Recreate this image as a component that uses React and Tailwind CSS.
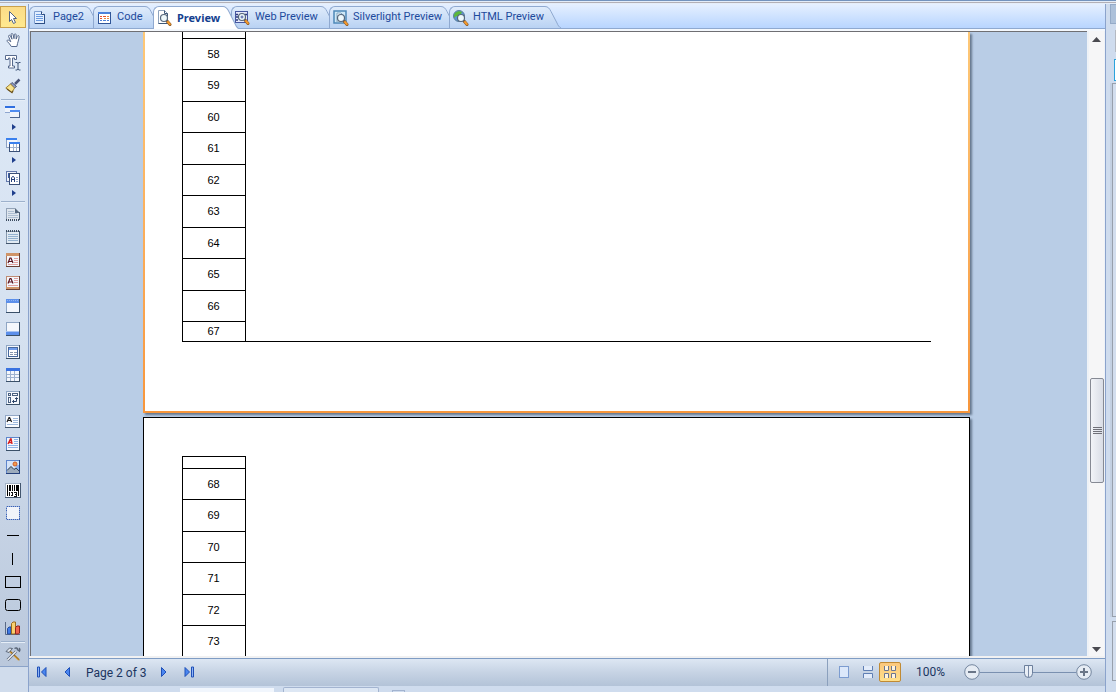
import React from 'react';
import clsx from 'clsx';

const Icon = ({ size = 16, className, children }) => (
  <svg width={size} height={size} viewBox={`0 0 ${size} ${size}`} className={clsx('shrink-0', className)} fill="none" aria-hidden="true">
    {children}
  </svg>
);

/* ---------- shared bits of the icons ---------- */

const Lens = ({ x = 6, y = 6 }) => (
  <g>
    <path d={`M${x + 3} ${y + 3} l3 3.500`} stroke="#8a5a2a" strokeWidth="3" strokeLinecap="round" />
    <path d={`M${x + 4} ${y + 4} l1.800 2.200`} stroke="#f59a2c" strokeWidth="2" strokeLinecap="round" />
    <circle cx={x} cy={y} r="3.500" fill="#eef8fb" stroke="#56677c" strokeWidth="1.200" />
  </g>
);

const Sheet = ({ children, border = '#3a5068', light = '#8fa6c4' }) => (
  <g shapeRendering="crispEdges">
    <rect x="1" y="1" width="14" height="14" fill={border} />
    <rect x="1" y="1" width="13" height="13" fill={light} />
    <rect x="2" y="2" width="12" height="12" fill="#f4f7fc" />
    {children}
  </g>
);

/* ---------- tab icons ---------- */

const PageIcon = () => (
  <Icon>
    <path d="M1.500 1.500h7l3 3v9h-10z" fill="#e3efff" stroke="#7f9fd0" />
    <path d="M11.500 4v10M2 13.500h10" stroke="#2d4f86" />
    <path d="M8.500 1.500v3h3" fill="#fff" stroke="#2d4f86" />
    <path d="M3 4.500h5M3 6.500h7M3 8.500h7M3 10.500h7" stroke="#6b9be0" />
  </Icon>
);

const CodeIcon = () => (
  <Icon>
    <g shapeRendering="crispEdges">
      <rect x="1" y="2" width="13" height="12" fill="#2f5597" />
      <rect x="1" y="2" width="12" height="2" fill="#4d82da" />
      <rect x="2" y="4" width="11" height="9" fill="#fff" />
      <path d="M3 6.500h2M6 6.500h3M3 8.500h2" stroke="#e8502e" />
      <path d="M10 6.500h2M7 8.500h2M10 8.500h2" stroke="#f08a3c" />
      <path d="M3 10.500h2M6 10.500h3M10 10.500h2" stroke="#4d82da" />
    </g>
  </Icon>
);

const PreviewIcon = () => (
  <Icon>
    <path d="M1.500 .5h6l3 3v10h-9z" fill="#fff" stroke="#8fa3bd" />
    <path d="M7.500 .5v3h3v10h-9" stroke="#3e5878" />
    <Lens x={7} y={8} />
  </Icon>
);

const WebIcon = () => (
  <Icon>
    <rect x="0.500" y="1.500" width="12" height="11" fill="#e6e9fa" stroke="#4656a0" />
    <path d="M1 4.500h2M1 7h2M1 10h2M10 4.500h2" stroke="#2d3b7c" strokeWidth="1.500" />
    <Lens x={7} y={7} />
    <path d="M5.500 7h3M7 5.500v3" stroke="#4656a0" />
  </Icon>
);

const SilverlightIcon = () => (
  <Icon>
    <rect x="1" y="1" width="12" height="12" fill="#cfe8f6" stroke="#4d88b8" strokeWidth="1.500" />
    <path d="M4 3h4l3 3v6H4z" fill="#fff" stroke="#7fa6c4" />
    <Lens x={8} y={8} />
  </Icon>
);

const HtmlIcon = () => (
  <Icon>
    <circle cx="6" cy="6" r="5.500" fill="#5c94d8" stroke="#5a7f9c" />
    <path d="M2 3c2-2 5-2.500 7-1l-1 2-2 .5L5 7 3 6 1.500 8C.5 6 1 4 2 3z" fill="#5cb83a" />
    <Lens x={8} y={8} />
  </Icon>
);

/* ---------- toolbox icons ---------- */

const ArrowTool = () => (
  <Icon>
    <path d="M4.500 2.500v10l2-2 2 4 2-1-2-4h3z" fill="#fff" stroke="#4f6285" />
  </Icon>
);

const HandTool = () => (
  <Icon>
    <path d="M5.500 14.500c-1-2-2.500-3.500-4-5-.8-1.200.5-2 1.500-1.200L5 9.800 2.800 4.500c-.4-1.400 1.200-1.800 1.800-.6l1.600 3.300-.9-4.600c-.1-1.400 1.500-1.500 1.900-.2l1 4.300.3-4c.2-1.300 1.700-1.100 1.800.1l.1 4.300 1.100-2.900c.6-1.100 1.900-.7 1.800.5-.1 3-1.500 5.500-2.200 9.800z" transform="translate(.8 0)" fill="#fff" stroke="#56698c" strokeLinejoin="round" />
  </Icon>
);

const TextTool = () => (
  <Icon>
    <path d="M.5 .5h11v4h-2v-1.500h-2v8h2v2h-6v-2h1.500v-8h-1.500v1.500h-3z" fill="#fff" stroke="#56698c" />
    <path d="M10.500 7.500h1.500l1 .8 1-.8h1.500M13 8v6M10.500 15h1.500l1-.8 1 .8h1.500" stroke="#3f5479" />
  </Icon>
);

const BrushTool = () => (
  <Icon>
    <path d="M14.500 1.500 10 6" stroke="#4a5578" strokeWidth="2.500" />
    <path d="M7 4.500l4.500 4L9.500 10 5.500 6z" fill="#8f9cc4" stroke="#4a5578" />
    <path d="M5.500 6 9.500 10 7 14.500C5 13 2.500 11.500.8 10z" fill="#f8e38c" stroke="#a08338" strokeLinejoin="round" />
    <path d="M2 11l5 3.700 1-2" stroke="#6b5220" strokeWidth="1.200" />
  </Icon>
);

const BandsTool = () => (
  <Icon>
    <g shapeRendering="crispEdges">
      <rect x="0" y="2" width="10" height="6" fill="#eef3fb" />
      <path d="M0 8.500h5" stroke="#8fa6cf" />
      <rect x="0" y="2" width="10" height="2" fill="#2f6fe0" />
      <rect x="5" y="6" width="10" height="7" fill="#eef3fb" />
      <path d="M14.500 6v8M5 13.500h10" stroke="#4a6490" />
      <rect x="5" y="6" width="10" height="2" fill="#4f8cf0" />
    </g>
  </Icon>
);

const CrossBandsTool = () => (
  <Icon>
    <g shapeRendering="crispEdges">
      <rect x="1" y="1" width="11" height="9" fill="#f3f6fc" />
      <path d="M1.500 1v9H4" stroke="#8aa0c4" />
      <rect x="1" y="1" width="11" height="2" fill="#3a80ee" />
      <rect x="4" y="5" width="11" height="10" fill="#fff" />
      <path d="M4.500 5v10M4 14.500h11M14.500 5v10" stroke="#3a5078" />
      <rect x="4" y="5" width="11" height="2" fill="#3a80ee" />
      <path d="M8.500 7v7M11.500 7v7M5 10.500h9" stroke="#a0b2cf" />
    </g>
  </Icon>
);

const ComponentsTool = () => (
  <Icon>
    <g shapeRendering="crispEdges">
      <rect x="1.500" y="1.500" width="10" height="10" fill="#eef2fa" stroke="#6379ac" />
      <path d="M3.500 3v5M3 3.500h2" stroke="#3c5ea6" />
      <rect x="4.500" y="3.500" width="10" height="11" fill="#fff" stroke="#3a5078" />
    </g>
    <path d="M6.500 12V8L7.500 6.500h1L9.500 8v4M6.500 9.500H9.500" stroke="#24407c" />
    <path d="M11 7.500h2M11 9.500h2M11 11.500h2" stroke="#8aa0c4" />
  </Icon>
);

const ReportTitle = () => (
  <Icon>
    <g shapeRendering="crispEdges">
      <path d="M1 2h9l5 5v7H1z" fill="#dfe6ee" />
      <path d="M1.500 2v12M1 2.500h9" stroke="#93a3b8" />
      <path d="M3 5.500h6M3 7.500h9M3 9.500h10M3 11.500h10" stroke="#aebfd2" />
      <path d="M14.500 6v8" stroke="#4b5d73" />
      <path d="M1 14h14" stroke="#3c4c60" strokeDasharray="1 1" strokeWidth="2" />
    </g>
    <path d="M10 2v5h5z" fill="#56687e" />
  </Icon>
);

const ReportSummary = () => (
  <Icon>
    <g shapeRendering="crispEdges">
      <rect x="1" y="2" width="14" height="13" fill="#43566e" />
      <rect x="1" y="2" width="13" height="12" fill="#8496ac" />
      <rect x="2" y="3" width="12" height="11" fill="#e1eaf3" />
      <path d="M3 5.500h10M3 7.500h10M3 9.500h10M3 11.500h10" stroke="#93b1cf" />
      <path d="M1 2h14" stroke="#3c4c60" strokeDasharray="1 1" strokeWidth="2" />
    </g>
  </Icon>
);

const PageHeaderBand = () => (
  <Icon>
    <Sheet border="#6b3f34" light="#b07c66">
      <rect x="1" y="1" width="13" height="3" fill="#cf9468" />
      <path d="M9 6.500h4M9 8.500h4M3 12.500h10M9 10.500h4" stroke="#e0a0a0" />
    </Sheet>
    <path d="M3 11l2-5h1l2 5M4 9.500h3" stroke="#5c1420" strokeWidth="1.200" />
  </Icon>
);

const PageFooterBand = () => (
  <Icon>
    <Sheet border="#6b3f34" light="#c08c74">
      <rect x="1" y="12" width="13" height="2" fill="#cf9468" />
      <path d="M9 3.500h4M9 5.500h4M9 7.500h4M3 10.500h10" stroke="#e0a0a0" />
    </Sheet>
    <path d="M3 8.500l2-5h1l2 5M4 7h3" stroke="#5c1420" strokeWidth="1.200" />
  </Icon>
);

const HeaderBand = () => (
  <Icon>
    <Sheet>
      <rect x="1" y="1" width="13" height="4" fill="#5c8fea" />
      <path d="M2 2.500h11" stroke="#8fb4f4" strokeDasharray="1 1" />
    </Sheet>
  </Icon>
);

const FooterBand = () => (
  <Icon>
    <Sheet>
      <rect x="1" y="11" width="13" height="3" fill="#5c8fea" />
      <path d="M1 10.500h13" stroke="#a9c4f2" />
    </Sheet>
  </Icon>
);

const PanelTool = () => (
  <Icon>
    <Sheet>
      <rect x="3.500" y="3.500" width="9" height="9" fill="#fff" stroke="#47689c" />
      <rect x="4" y="4" width="8" height="2" fill="#6f9cec" />
      <path d="M5 8.500h3M9 8.500h3M5 10.500h3M9 10.500h3" stroke="#8796ac" />
    </Sheet>
  </Icon>
);

const TableTool = () => (
  <Icon>
    <Sheet>
      <rect x="1" y="1" width="14" height="3" fill="#3a72e0" />
      <path d="M2 7.500h12M2 10.500h12M5.500 4v10M9.500 4v10" stroke="#9fb2cf" />
    </Sheet>
  </Icon>
);

const CrossTabTool = () => (
  <Icon>
    <Sheet>
      <path d="M3.500 3.500h2v2h-2zM7.500 3.500h5v2h-5zM3.500 7.500h2v5h-2z" stroke="#4a6080" />
    </Sheet>
    <path d="M7.500 11.500h4V8M9 10l-1.500 1.500L9 13M10 9l1.500-1.500L13 9" stroke="#2c4468" />
  </Icon>
);

const TextComponent = () => (
  <Icon>
    <g shapeRendering="crispEdges">
      <rect x="0" y="2" width="15" height="13" fill="#43566e" />
      <rect x="0" y="2" width="14" height="12" fill="#93a8c6" />
      <rect x="1" y="3" width="13" height="11" fill="#fafcff" />
      <path d="M8 5.500h5M8 7.500h5M8 9.500h5M2 11.500h11" stroke="#9db8dc" />
    </g>
    <path d="M2 9l2-4.500h.6l2 4.500M3 7.500h3" stroke="#222" strokeWidth="1.200" />
  </Icon>
);

const RichTextTool = () => (
  <Icon>
    <Sheet light="#5f86cc">
      <path d="M9 3.500h4M9 5.500h4M9 7.500h4M3 9.500h10M3 11.500h10" stroke="#8fb2e6" />
    </Sheet>
    <path d="M3 8l2.500-5h.6L7 8M4 6.500h3" stroke="#d81e1e" strokeWidth="1.400" />
  </Icon>
);

const ImageTool = () => (
  <Icon>
    <Sheet border="#24407c" light="#5f86cc">
      <rect x="2" y="2" width="12" height="12" fill="#d6e4f8" />
      <rect x="11" y="6" width="3" height="5" fill="#8fb2f0" />
    </Sheet>
    <path d="M2 11l4-4 3 3 2-1.500 3 3V14H2z" fill="#9cabbd" />
    <path d="M2 11.500l4-4 3 3 2-1.500 3 3" stroke="#33475f" />
    <circle cx="10" cy="5" r="2" fill="#f39a4c" stroke="#d05c2a" />
  </Icon>
);

const BarCodeTool = () => (
  <Icon>
    <g shapeRendering="crispEdges">
      <rect x="0" y="1" width="16" height="15" fill="#43566e" />
      <rect x="0" y="1" width="15" height="14" fill="#a3b3c6" />
      <rect x="1" y="2" width="14" height="13" fill="#fff" />
      <path d="M2.500 3v11M13.500 3v11M7.500 3v6M9.500 3v6" stroke="#000" />
      <path d="M5 3v6M12 3v6" stroke="#000" strokeWidth="2" />
      <path d="M4.500 10v4M6 10.500h2M7.500 10v4M6 13.500h2M9 10.500h3M10 12.500h2M9 14.500h3M11.500 10v4" stroke="#111" />
    </g>
  </Icon>
);

const ShapeTool = () => (
  <Icon>
    <rect x="2" y="2" width="12" height="12" fill="#f1f4fa" />
    <rect x="1.500" y="1.500" width="13" height="13" stroke="#3a62b8" strokeDasharray="1 1" shapeRendering="crispEdges" />
    <rect x="1.500" y="1.500" width="13" height="13" stroke="#3a62b8" strokeOpacity="0.300" />
  </Icon>
);

const HLineTool = () => <Icon><path d="M2 7.500h12" stroke="#000" /></Icon>;
const VLineTool = () => <Icon><path d="M7.500 2v12" stroke="#000" /></Icon>;
const RectTool = () => <Icon><rect x="0.500" y="2.500" width="15" height="11" stroke="#000" /></Icon>;
const RoundRectTool = () => <Icon><rect x="0.500" y="2.500" width="15" height="11" rx="2" stroke="#000" /></Icon>;

const ChartTool = () => (
  <Icon>
    <path d="M.5 2v12.500H15" stroke="#5a6a86" />
    <path d="M2.500 8.500 4 7h2v6l-1 1H2.500z" fill="#3f7be8" stroke="#234a9c" />
    <path d="M6.500 3.500 8 2h2.500v11l-1 1h-3z" fill="#f8d070" stroke="#9a6a1c" />
    <path d="M10.500 7.500 12 6h2.500v7l-1 1h-3z" fill="#f0644c" stroke="#8e241c" />
  </Icon>
);

const ToolsTool = () => (
  <Icon>
    <path d="M4 4.500 14 14" stroke="#d8a13c" strokeWidth="2" />
    <path d="M5 5l9.500 9" stroke="#7a5520" strokeWidth="0.800" />
    <path d="M1 5.500 4.500 2l3 .5-3.500 4z" fill="#dfe3ea" stroke="#5a6678" />
    <path d="M2.500 14 11 5.500" stroke="#5a6678" strokeWidth="2.600" />
    <path d="M2.500 14 11 5.500" stroke="#f2f5f8" strokeWidth="1.200" />
    <path d="M9.500 2.500c1.500-1 3-.5 3 1l2 1.500c.5-1 .5-2-.5-3" stroke="#5a6678" strokeWidth="1.500" />
  </Icon>
);

/* ---------- data ---------- */

const tools = [
  { name: 'Select', icon: ArrowTool, active: true },
  { name: 'Hand', icon: HandTool },
  { name: 'Text editor', icon: TextTool },
  { name: 'Copy style', icon: BrushTool },
  'separator',
  { name: 'Bands', icon: BandsTool, menu: true },
  { name: 'Cross bands', icon: CrossBandsTool, menu: true },
  { name: 'Components', icon: ComponentsTool, menu: true },
  'separator',
  { name: 'Report title', icon: ReportTitle },
  { name: 'Report summary', icon: ReportSummary },
  { name: 'Page header', icon: PageHeaderBand },
  { name: 'Page footer', icon: PageFooterBand },
  { name: 'Header', icon: HeaderBand },
  { name: 'Footer', icon: FooterBand },
  { name: 'Panel', icon: PanelTool },
  { name: 'Table', icon: TableTool },
  { name: 'Cross-tab', icon: CrossTabTool },
  { name: 'Text', icon: TextComponent },
  { name: 'Rich text', icon: RichTextTool },
  { name: 'Image', icon: ImageTool },
  { name: 'Bar code', icon: BarCodeTool },
  { name: 'Shape', icon: ShapeTool },
  { name: 'Horizontal line', icon: HLineTool },
  { name: 'Vertical line', icon: VLineTool },
  { name: 'Rectangle', icon: RectTool },
  { name: 'Rounded rectangle', icon: RoundRectTool },
  { name: 'Chart', icon: ChartTool },
  'separator',
  { name: 'Toolbox settings', icon: ToolsTool },
];

const tabs = [
  { label: 'Page2', icon: PageIcon, width: 'w-[64px]' },
  { label: 'Code', icon: CodeIcon, width: 'w-[60px]' },
  { label: 'Preview', icon: PreviewIcon, width: 'w-[78px]', active: true },
  { label: 'Web Preview', icon: WebIcon, width: 'w-[98px]' },
  { label: 'Silverlight Preview', icon: SilverlightIcon, width: 'w-[120px]' },
  { label: 'HTML Preview', icon: HtmlIcon, width: 'w-[104px]' },
];

const firstPage = [58, 59, 60, 61, 62, 63, 64, 65, 66];
const secondPage = [68, 69, 70, 71, 72, 73];

/* ---------- layout ---------- */

const Toolbox = () => (
  <aside className="w-[28px] shrink-0 flex flex-col bg-[#d0dcec]">
    <div className="flex flex-col pt-[2px] bg-linear-to-b from-[#dfeaf8] via-[#d5e1f0] to-[#bac8dc] border-b border-[#8ba3c8]">
      {tools.map((tool, i) =>
        tool === 'separator' ? (
          <div key={i} className="h-[3px] pt-px pl-px pr-[3px]">
            <div className="h-[2px] bg-[#9db1cc] border-b border-[#e6eef8]" />
          </div>
        ) : (
          <React.Fragment key={tool.name}>
            <button
              aria-label={tool.name}
              className={clsx(
                'w-[26px] flex items-center justify-center',
                tool.active ? 'h-[22px] mb-px border border-[#c9a04c] bg-linear-to-b from-[#fbdc88] to-[#ffe98f]' : 'h-[23px] pb-px'
              )}
            >
              <tool.icon />
            </button>
            {tool.menu && (
              <button aria-label={`${tool.name} menu`} className="w-[28px] h-[10px] pb-1 flex items-center justify-center">
                <svg width="4" height="6" viewBox="0 0 4 6"><path d="M0 0l4 3-4 3z" fill="#1f3f8c" /></svg>
              </button>
            )}
          </React.Fragment>
        )
      )}
    </div>
  </aside>
);

const Tab = ({ label, icon: TabIcon, width, active }) => (
  <button role="tab" aria-selected={!!active} className={clsx('relative flex h-[22px] shrink-0', width, active && 'z-10 h-[23px]')}>
    <span
      className={clsx(
        'flex flex-1 h-full items-center gap-1 pl-[3px] mr-2 border-t border-l rounded-tl-md whitespace-nowrap text-[11px]',
        active
          ? "bg-white border-[#8fa9d0] font-bold text-[#153f8f] font-['Noto_Sans',sans-serif]"
          : 'bg-linear-to-b from-[#e0ecfb] to-[#b9d2f3] border-[#8fa9d0] text-[#1d4a9c]'
      )}
    >
      <TabIcon />
      <span className="relative z-10">{label}</span>
    </span>
    <svg className="absolute top-0 -right-2 h-full" width="16" height="22" viewBox="0 0 16 22" preserveAspectRatio="none" fill="none" aria-hidden="true">
      <defs>
        <linearGradient id="tabCap" x1="0" y1="0" x2="0" y2="1">
          <stop offset="0" stopColor="#e0ecfb" />
          <stop offset="1" stopColor="#b9d2f3" />
        </linearGradient>
      </defs>
      <path d="M0 0c3 0 4.500 2 6 5l6 12c1 2.500 2 4 4 5H0z" fill={active ? '#fff' : 'url(#tabCap)'} />
      <path d="M0 .5c3 0 4.500 2 6 5l6 11.500c1 2.500 2 4 4 5" stroke="#8fa9d0" />
    </svg>
  </button>
);

const Cell = ({ height, children }) => (
  <tr className={height}>
    <td className="border-b border-black p-0 text-center align-middle leading-none">{children}</td>
  </tr>
);

const ReportTable = ({ children }) => (
  <table className="w-[64px] border-x border-black border-separate border-spacing-0 text-[11px] text-black">
    <tbody>{children}</tbody>
  </table>
);

const Pages = () => (
  <div className="flex-1 min-w-0 overflow-hidden bg-[#b9cde6] border-t border-l border-[#6f6f73] pr-[6px] flex flex-col items-center gap-1">
    <section className="w-[827px] shrink-0 px-[2px] pb-[2px] bg-linear-to-b from-[#fdc878] to-[#f7963c] shadow-[2px_2px_2px_#66788f]">
      <div className="bg-white px-[37px] pb-[69px]">
        <div className="border-b border-black">
          <div className="-mb-px">
            <ReportTable>
              <Cell height="h-[7px]" />
              {firstPage.map((n, i) => (
                <Cell key={n} height={i % 2 ? 'h-[32px]' : 'h-[31px]'}>{n}</Cell>
              ))}
              <Cell height="h-[20px]">67</Cell>
            </ReportTable>
          </div>
        </div>
      </div>
    </section>
    <section className="w-[827px] shrink-0 border border-black bg-white pl-[38px] pt-[38px] pb-10 shadow-[2px_2px_2px_#66788f]">
      <div className="border-t border-black w-[64px]">
        <ReportTable>
          <Cell height="h-[12px]" />
          {secondPage.map((n, i) => (
            <Cell key={n} height={i % 2 ? 'h-[32px]' : 'h-[31px]'}>{n}</Cell>
          ))}
        </ReportTable>
      </div>
    </section>
  </div>
);

const ScrollBar = () => (
  <div className="w-[18px] shrink-0 flex flex-col border-l-2 border-r border-[#eef2f7] bg-[#f6f6f7]">
    <button aria-label="Scroll up" className="h-[16px] flex items-center justify-center">
      <svg width="9" height="5" viewBox="0 0 9 5"><path d="M4.500 0 9 5H0z" fill="#4a4a50" /></svg>
    </button>
    <div className="flex-1 flex flex-col">
      <div className="grow-[330]" />
      <div className="h-[105px] ml-px rounded-xs border border-[#868a94] bg-linear-to-r from-[#f2f4f8] to-[#d9dde6] flex flex-col items-center justify-center gap-px">
        {[0, 1, 2, 3].map((n) => (
          <div key={n} className="w-[9px] h-px bg-[#6f7078]" />
        ))}
      </div>
      <div className="grow-[158]" />
    </div>
    <button aria-label="Scroll down" className="h-[14px] flex items-center justify-center">
      <svg width="9" height="5" viewBox="0 0 9 5"><path d="M0 0h9L4.500 5z" fill="#4a4a50" /></svg>
    </button>
  </div>
);

const NavButton = ({ label, children }) => (
  <button aria-label={label} className="w-[25px] h-[22px] pb-px flex items-center justify-center">
    <svg width="10" height="12" viewBox="0 0 10 12" fill="#4a86f0" stroke="#1f50b8" strokeLinejoin="round">{children}</svg>
  </button>
);

const RoundButton = ({ label, plus }) => (
  <button aria-label={label} className="w-[16px] h-[16px] shrink-0">
    <svg width="16" height="16" viewBox="0 0 16 16" fill="none">
      <circle cx="8" cy="8" r="7.300" fill="#e6ecf4" stroke="#74869f" />
      <path d="M4 8h8" stroke="#6a7688" strokeWidth="2" />
      {plus && <path d="M8 4v8" stroke="#6a7688" strokeWidth="2" />}
    </svg>
  </button>
);

const StatusBar = () => (
  <footer className="h-[28px] shrink-0 border-t border-[#7f9cc4] bg-linear-to-b from-[#dde7f3] via-[#c6d3e4] to-[#b3c3d8] flex items-center text-[12px] text-[#1b3560]">
    <NavButton label="First page">
      <path d="M.5 1v10h2V1z" fill="#8fb4f6" />
      <path d="M9 1.500v9L4.500 6z" />
    </NavButton>
    <NavButton label="Previous page"><path d="M7.500 1.500v9L3 6z" /></NavButton>
    <span className="pl-[7px] w-[72px] whitespace-nowrap">Page 2 of 3</span>
    <NavButton label="Next page"><path d="M2.500 1.500v9L7 6z" /></NavButton>
    <NavButton label="Last page">
      <path d="M1 1.500v9L5.500 6z" />
      <path d="M7.500 1v10h2V1z" fill="#8fb4f6" />
    </NavButton>
    <div className="ml-auto h-full flex items-center border-l border-[#8ba0bd] pr-[13px] pb-px">
      <button aria-label="Single page" className="w-[32px] h-[22px] flex items-center justify-center">
        <svg width="10" height="12" viewBox="0 0 10 12"><rect x=".5" y=".5" width="9" height="11" fill="#dce8fa" stroke="#7c9cd0" /></svg>
      </button>
      <button aria-label="Continuous" className="w-[16px] h-[22px] mr-[3px] flex items-center justify-center">
        <svg width="10" height="12" viewBox="0 0 10 12" fill="#e3ecfa" stroke="#5f7fb4"><path d="M.5 0v4.500h9V0M.5 12V7.500h9V12" /></svg>
      </button>
      <button aria-label="Multiple pages" className="w-[22px] h-[20px] border border-[#c08a34] rounded-xs bg-linear-to-b from-[#fbc77c] to-[#ffe08a] flex items-center justify-center">
        <svg width="12" height="12" viewBox="0 0 12 12" fill="#fff4dc" stroke="#6b7590"><path d="M.5 0v4.500h4V0M7.500 0v4.500h4V0M.5 12V7.500h4V12M7.500 12V7.500h4V12" /></svg>
      </button>
      <span className="w-[63px] pr-1 text-center">100%</span>
      <RoundButton label="Zoom out" />
      <input
        type="range"
        aria-label="Zoom"
        defaultValue="50"
        className="w-[96px] h-[16px] appearance-none bg-transparent [&::-webkit-slider-runnable-track]:h-px [&::-webkit-slider-runnable-track]:bg-[#7a90b0] [&::-webkit-slider-thumb]:appearance-none [&::-webkit-slider-thumb]:w-[9px] [&::-webkit-slider-thumb]:h-[13px] [&::-webkit-slider-thumb]:-mt-[7px] [&::-webkit-slider-thumb]:rounded-b-full [&::-webkit-slider-thumb]:border [&::-webkit-slider-thumb]:border-[#6c7f9c] [&::-webkit-slider-thumb]:bg-[linear-gradient(90deg,#e8eef6_3px,#7a8aa6_3px,#7a8aa6_4px,#e8eef6_4px)]"
      />
      <RoundButton label="Zoom in" plus />
    </div>
  </footer>
);

const SidePanel = () => (
  <aside className="w-[10px] shrink-0 flex flex-col pl-1 bg-[#cfdcee]">
    <div className="h-[20px] bg-[#adc1da] border border-[#95abc8] border-r-0" />
    <div className="h-[35px] pt-[6px] pl-[5px]"><div className="h-[22px] bg-[#b4b9c2]" /></div>
    <div className="h-[22px] ml-1 bg-white border border-[#2ba3dc] border-r-0" />
    <div className="flex-1 mt-[2px] bg-[#c3d0e2] pl-[2px]">
      <div className="h-full border border-r-0 border-[#98a0ac] bg-[#d3deee]" />
    </div>
    <div className="h-[60px] mt-1 ml-[2px] border border-r-0 border-[#98a0ac] bg-[#d3deee]" />
    <div className="h-[11px]" />
  </aside>
);

const App = () => {
  return (
    <div className="h-screen flex flex-col overflow-hidden bg-[#cfdcee] font-[Roboto,sans-serif]">
      <div className="h-1 shrink-0 border-t border-[#7393bd] bg-[#e4edf9] pt-px">
        <div className="h-px bg-[#b3b0b6]" />
      </div>
      <div className="flex-1 min-h-0 flex">
        <Toolbox />
        <main className="flex-1 min-w-0 flex flex-col border-x border-[#8ba3cc]">
          <div role="tablist" className="h-[25px] shrink-0 pt-[2px] flex bg-linear-to-b from-[#e6f0ff] to-[#b8d5ff] border-b border-[#8fa9d0]">
            {tabs.map((tab) => (
              <Tab key={tab.label} {...tab} />
            ))}
          </div>
          <div className="h-[2px] shrink-0 bg-[#f4f8fd]" />
          <div className="flex-1 min-h-0 flex pl-px font-['Liberation_Sans',sans-serif]">
            <Pages />
            <ScrollBar />
          </div>
          <div className="h-[2px] shrink-0 bg-[#f1f1f2]" />
          <StatusBar />
          {/* tops of the panels docked below */}
          <div className="h-[6px] shrink-0 flex items-end pl-[151px]">
            <div className="w-[94px] h-1 bg-[#f1f6fd]" />
            <div className="w-[96px] h-[5px] ml-[9px] border border-b-0 border-[#a3b4d0] rounded-t-xs bg-[#dde7f4]" />
            <div className="w-[13px] h-[2px] ml-[13px] border border-b-0 border-[#a3b4d0]" />
          </div>
        </main>
        <SidePanel />
      </div>
    </div>
  );
};

export default App;
